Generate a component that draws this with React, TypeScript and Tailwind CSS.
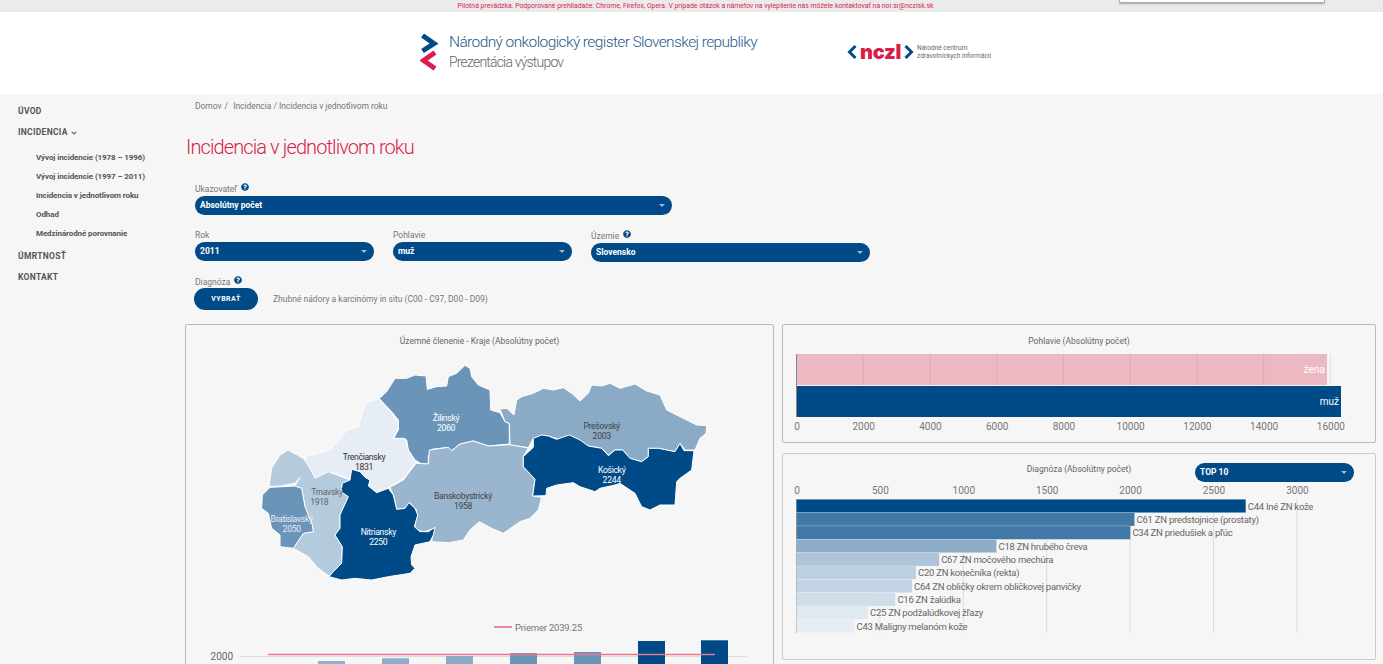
import { FaQuestionCircle, FaChevronDown } from "react-icons/fa";

const navy = "#004b87";

// map outlines were traced from crops, so each list carries the crop's offset
function outline(dx: number, dy: number, pts: string) {
  const coords = pts.trim().split(/\s+/).map((p) => {
    const [x, y] = p.split(",").map(Number);
    return `${x + dx},${y + dy}`;
  });
  return `M${coords.join(" L")} Z`;
}

const regions = [
  { fill: "#6b94b9", d: "M418,116 L440,95 L465,55 L500,55 L525,45 L558,48 L562,88 L590,80 L620,78 L625,50 L650,40 L675,16 L690,25 L695,50 L715,75 L750,90 L752,150 L780,158 L795,185 L808,190 L808,252 L745,258 L700,243 L660,252 L635,272 L625,262 L575,268 L565,290 L565,312 L545,312 L525,300 L505,270 L500,240 L470,235 L458,240 L475,210 L475,180 L455,155 Z" },
  { fill: "#8aaac6", d: outline(780, 75, "0,72 20,70 42,90 50,45 65,35 100,25 130,10 160,15 190,8 215,25 240,48 265,25 275,0 305,3 330,-5 360,10 405,-3 440,18 480,30 500,75 560,105 590,120 620,122 618,145 600,160 585,195 555,195 540,175 525,200 475,190 445,190 445,215 425,230 390,220 368,195 345,195 325,210 305,190 265,183 210,152 185,165 140,152 100,160 85,188 30,180 28,115 15,110") },
  { fill: "#9ab5ce", d: "M565,312 L568,270 L625,262 L635,272 L660,252 L700,243 L745,258 L808,254 L865,264 L850,290 L850,320 L885,358 L878,408 L905,412 L895,450 L870,475 L840,485 L790,520 L755,505 L718,485 L690,510 L670,540 L625,548 L575,545 L582,505 L555,515 L525,510 L525,490 L530,450 L510,428 L495,445 L470,448 L460,405 L450,382 L490,360 L528,310 Z" },
  { fill: "#004b87", d: outline(780, 75, "100,160 125,150 145,153 170,163 208,150 240,165 265,183 305,190 325,212 345,195 368,195 390,220 425,230 445,215 445,190 475,190 525,200 540,175 552,197 582,197 575,255 540,280 530,290 525,360 480,360 450,375 425,365 405,325 360,295 345,300 300,310 285,320 240,305 220,293 170,300 140,310 138,332 98,333 105,283 70,245 70,215 100,187") },
  { fill: "#e6edf4", d: outline(45, 120, "373,-4 410,40 430,65 430,85 415,115 450,115 460,150 482,188 445,235 400,265 365,278 340,258 345,240 330,232 315,215 290,208 285,240 260,228 220,215 180,235 165,205 150,195 150,170 225,150 268,100 275,90 310,80 330,10") },
  { fill: "#b4cadd", d: outline(45, 120, "42,260 50,205 75,165 100,150 145,175 165,205 180,235 220,215 285,240 262,250 258,275 280,290 255,345 255,385 240,405 262,440 260,490 222,528 190,505 160,470 115,445 145,400 175,395 172,375 150,320 140,265 120,258 135,232 120,250 75,258") },
  { fill: "#004b87", d: outline(45, 120, "290,208 315,215 330,232 345,240 340,258 365,278 400,265 415,285 425,328 450,325 462,308 480,325 488,345 478,380 495,395 520,395 540,382 535,405 525,425 480,435 468,470 470,495 480,505 465,520 400,530 350,540 300,535 260,540 222,530 235,515 260,490 262,440 240,405 255,385 255,345 280,290 258,275 262,250 285,240") },
  { fill: "#6b94b9", d: outline(45, 120, "20,325 22,285 45,262 120,258 140,265 150,320 172,375 175,395 145,400 115,445 75,440 75,405 50,385 40,340") },
];

const mapLabels = [
  { name: "Žilinský", value: "2060", x: 618, y: 182, c: "#ffffff" },
  { name: "Prešovský", value: "2003", x: 1085, y: 208, c: "#444444" },
  { name: "Košický", value: "2244", x: 1115, y: 338, c: "#ffffff" },
  { name: "Trenčiansky", value: "1831", x: 372, y: 301, c: "#333333" },
  { name: "Trnavský", value: "1918", x: 261, y: 406, c: "#666666", vx: 238 },
  { name: "Banskobystrický", value: "1958", x: 669, y: 417, c: "#444444" },
  { name: "Bratislavský", value: "2050", x: 155, y: 487, c: "#e6edf4" },
  { name: "Nitriansky", value: "2250", x: 415, y: 524, c: "#ffffff" },
];

const diagnoses = [
  { label: "C44 Iné ZN kože", end: 1245.8, fill: "#004b87" },
  { label: "C61 ZN predstojnice (prostaty)", end: 1134.6, fill: "#4278a6" },
  { label: "C34 ZN priedušiek a pľúc", end: 1130.4, fill: "#4278a6" },
  { label: "C18 ZN hrubého čreva", end: 996.5, fill: "#8eadc9" },
  { label: "C67 ZN močového mechúra", end: 939.2, fill: "#adc4da" },
  { label: "C20 ZN konečníka (rekta)", end: 916, fill: "#bcd0e1" },
  { label: "C64 ZN obličky okrem obličkovej panvičky", end: 912, fill: "#c2d4e3" },
  { label: "C16 ZN žalúdka", end: 895.4, fill: "#cfdde8" },
  { label: "C25 ZN podžalúdkovej žľazy", end: 868, fill: "#e0e9f0" },
  { label: "C43 Malígny melanóm kože", end: 854.6, fill: "#e6edf4" },
];

const averageBars = [
  { x: 318, top: 661, fill: "#94b0cb" },
  { x: 382, top: 658.3, fill: "#8eabc7" },
  { x: 446, top: 656, fill: "#8aaac6" },
  { x: 510, top: 653, fill: "#6b94b9" },
  { x: 574, top: 652, fill: "#6b94b9" },
  { x: 638, top: 641, fill: "#004b87" },
  { x: 701, top: 640.3, fill: "#004b87" },
];

function Help() {
  return <FaQuestionCircle className="inline-block text-[8px] text-[#004b87] ml-[4px] align-[1px]" />;
}

function Select({ label, className }: { label: string; className: string }) {
  return (
    <div className={`h-[19px] rounded-full bg-[#004b87] text-white text-[8.5px] font-bold flex items-center justify-between pl-[5px] pr-[7px] ${className}`}>
      <span>{label}</span>
      <span className="border-x-[3px] border-x-transparent border-t-[3px] border-t-[#9fb9d0]" />
    </div>
  );
}

function Field({ label, help, select, className }: { label: string; help?: boolean; select: string; className: string }) {
  return (
    <div>
      <div className="text-[8.5px] leading-[10px] mb-[2px] text-[#777]">
        {label}
        {help && <Help />}
      </div>
      <Select label={select} className={className} />
    </div>
  );
}

function SubLink({ children }: { children: string }) {
  return <li className="h-[19px] flex items-center text-[8px] font-bold tracking-[-0.1px] text-[#555]">{children}</li>;
}

function TopLink({ children }: { children: React.ReactNode }) {
  return <div className="text-[8.5px] font-bold text-[#555] tracking-[0.3px]">{children}</div>;
}

export default function App() {
  return (
    <div className="w-[1383px] h-[664px] overflow-hidden bg-[#f6f6f6] font-['Roboto',sans-serif] relative">
      {/* pilot banner */}
      <div className="h-[12px] bg-[#ebebeb] flex items-center justify-center pl-[8px] text-[6.85px] text-[#d81e4a]">
        Pilotná prevádzka. Podporované prehliadače: Chrome, Firefox, Opera. V prípade otázok a námetov na vylepšenie nás môžete kontaktovať na nor.sr@nczisk.sk
      </div>
      <div className="absolute left-[1119px] top-0 w-[206px] h-[3px] bg-white border-x border-b border-[#aaa] rounded-b-[2px] shadow-[0_1px_2px_rgba(0,0,0,0.3)]" />

      {/* header */}
      <header className="h-[82px] bg-white flex items-center pl-[420px] pb-[2px]">
        <svg width="18" height="38" viewBox="0 0 18 38" className="mr-[11px]">
          <path d="M2.5 2.5 L14 10.5 L2.5 18" fill="none" stroke="#004b87" strokeWidth="5" />
          <path d="M15 19.5 L3.5 27.5 L15 35.5" fill="none" stroke="#d81e4a" strokeWidth="5" />
        </svg>
        <div className="mr-[90px]">
          <div className="text-[15.5px] leading-[20px] tracking-[-0.6px] font-light text-[#1f5a8c]">Národný onkologický register Slovenskej republiky</div>
          <div className="text-[14px] leading-[20px] tracking-[-0.8px] font-light text-[#666]">Prezentácia výstupov</div>
        </div>
        <div className="flex items-center">
          <svg width="10" height="16" viewBox="0 0 10 16">
            <path d="M8.5 2 L2.5 8 L8.5 14" fill="none" stroke="#004b87" strokeWidth="3" />
          </svg>
          <span className="mx-[3px] text-[#d81e4a] text-[20px] leading-[20px] font-black tracking-[-0.3px] font-['Inter',sans-serif] lowercase">ncz<span className="uppercase">I</span></span>
          <svg width="10" height="16" viewBox="0 0 10 16">
            <path d="M1.5 2 L7.5 8 L1.5 14" fill="none" stroke="#004b87" strokeWidth="3" />
          </svg>
          <div className="ml-[3px] text-[6.5px] leading-[8px] text-[#666]">
            Národné centrum<br />zdravotníckych informácií
          </div>
        </div>
      </header>

      <div className="flex">
        {/* sidebar */}
        <aside className="w-[186px] shrink-0 pl-[18px] pt-[11px]">
          <TopLink>ÚVOD</TopLink>
          <div className="mt-[8px]">
            <TopLink>
              INCIDENCIA <FaChevronDown className="inline-block text-[6px] ml-[1px]" />
            </TopLink>
          </div>
          <ul className="pl-[18px] mt-[10px]">
            <SubLink>Vývoj incidencie (1978 – 1996)</SubLink>
            <SubLink>Vývoj incidencie (1997 – 2011)</SubLink>
            <SubLink>Incidencia v jednotlivom roku</SubLink>
            <SubLink>Odhad</SubLink>
            <SubLink>Medzinárodné porovnanie</SubLink>
          </ul>
          <div className="mt-[6px]">
            <TopLink>ÚMRTNOSŤ</TopLink>
          </div>
          <div className="mt-[9px]">
            <TopLink>KONTAKT</TopLink>
          </div>
        </aside>

        {/* main */}
        <main className="w-[1190px]">
          <div className="pl-[9px] pt-[7px] text-[8.5px] leading-[10px] tracking-[-0.05px] text-[#777]">
            Domov <span className="mx-[1px]">/</span> &nbsp;Incidencia / Incidencia v jednotlivom roku
          </div>
          <h1 className="mt-[23px] text-[20px] leading-[26px] tracking-[-0.9px] font-light text-[#d81e4a]">Incidencia v jednotlivom roku</h1>

          <div className="pl-[9px] mt-[23px]">
            <Field label="Ukazovateľ" help select="Absolútny počet" className="w-[477px]" />
            <div className="flex gap-[19px] mt-[15px]">
              <Field label="Rok" select="2011" className="w-[179px]" />
              <Field label="Pohlavie" select="muž" className="w-[179px]" />
              <Field label="Územie" help select="Slovensko" className="w-[279px]" />
            </div>
            <div className="mt-[14px] text-[8.5px] leading-[10px] text-[#777]">
              Diagnóza
              <Help />
            </div>
            <div className="flex items-center mt-[1px]">
              <button className="w-[64px] h-[22px] ml-[-1px] rounded-full bg-[#004b87] text-white text-[7px] font-bold tracking-[0.5px]">VYBRAŤ</button>
              <span className="ml-[15px] text-[8.5px] text-[#777]">Zhubné nádory a karcinómy in situ (C00 - C97, D00 - D09)</span>
            </div>
          </div>

          <div className="flex gap-[8px] mt-[14px] ml-[-1px]">
            {/* territorial card */}
            <section className="w-[589px] h-[420px] shrink-0 border border-[#bbb] rounded-[2px]">
              <div className="text-center text-[8.5px] leading-[10px] text-[#666] mt-[11px]">Územné členenie - Kraje (Absolútny počet)</div>
              <svg width="480" height="230" viewBox="0 0 1440 690" className="ml-[54px] mt-[14px] block">
                {regions.map((r, i) => (
                  <path key={i} d={r.d} fill={r.fill} stroke="#ffffff" strokeWidth="3" strokeLinejoin="round" />
                ))}
                {mapLabels.map((l) => (
                  <g key={l.name} fontSize="26" letterSpacing="-1" fill={l.c} textAnchor="middle">
                    <text x={l.x} y={l.y}>{l.name}</text>
                    <text x={l.vx ?? l.x} y={l.y + 30}>{l.value}</text>
                  </g>
                ))}
              </svg>
              <svg width="587" height="120" viewBox="186 590 587 120" className="block">
                <line x1="494" x2="512" y1="627" y2="627" stroke="#d81e4a" />
                <text x="515" y="630.5" fontSize="9.5" letterSpacing="-0.2" fill="#777">Priemer 2039.25</text>
                <line x1="240" x2="747" y1="656.5" y2="656.5" stroke="#dddddd" />
                <text x="233" y="660" fontSize="10" textAnchor="end" fill="#666">2000</text>
                {averageBars.map((b) => (
                  <rect key={b.x} x={b.x} y={b.top} width="27" height={700 - b.top} fill={b.fill} />
                ))}
                <line x1="268" x2="715" y1="654.5" y2="654.5" stroke="#e8788c" strokeWidth="1.5" />
              </svg>
            </section>

            {/* right column */}
            <div className="w-[594px] flex flex-col gap-[10px]">
              <section className="h-[119px] border border-[#bbb] rounded-[2px]">
                <svg width="592" height="117" viewBox="783 325 592 117" className="block">
                  <text x="1079" y="344" fontSize="8.5" textAnchor="middle" fill="#666">Pohlavie (Absolútny počet)</text>
                  <rect x="796.5" y="354" width="530.5" height="31" fill="#ecb8c2" />
                  {[0, 1, 2, 3, 4, 5, 6, 7, 8].map((i) => (
                    <line key={i} x1={796.5 + i * 66.73} x2={796.5 + i * 66.73} y1="354" y2="385" stroke={i === 8 ? "#e0e0e0" : "#dfa9b5"} />
                  ))}
                  <rect x="796.5" y="386" width="544.5" height="31" fill={navy} />
                  <line x1="796.5" x2="796.5" y1="354" y2="417" stroke="#888" />
                  <text x="1325" y="373" fontSize="10" textAnchor="end" fill="#ffffff">žena</text>
                  <text x="1339" y="405" fontSize="10" textAnchor="end" fill="#ffffff">muž</text>
                  {[0, 2000, 4000, 6000, 8000, 10000, 12000, 14000, 16000].map((v, i) => (
                    <text key={v} x={797 + i * 66.73} y="430" fontSize="10" textAnchor="middle" fill="#777">{v}</text>
                  ))}
                </svg>
              </section>
              <section className="h-[207px] border border-[#ccc] rounded-[2px] relative">
                <svg width="592" height="205" viewBox="783 454 592 205" className="block">
                  <text x="1079" y="472" fontSize="8.5" textAnchor="middle" fill="#666">Diagnóza (Absolútny počet)</text>
                  {[0, 500, 1000, 1500, 2000, 2500, 3000].map((v, i) => (
                    <g key={v}>
                      <text x={797 + i * 83.4} y="494" fontSize="10" textAnchor="middle" fill="#777">{v}</text>
                      <line x1={796.5 + i * 83.4} x2={796.5 + i * 83.4} y1="499" y2="633" stroke={i === 0 ? "#888" : "#dddddd"} />
                    </g>
                  ))}
                  {diagnoses.map((d, i) => (
                    <g key={d.label}>
                      <rect x="796.5" y={499.3 + i * 13.34} width={d.end - 796.5} height="13.34" fill={d.fill} stroke="#ffffff" strokeOpacity="0.35" strokeWidth="0.5" />
                      <text x={d.end + 2} y={509.5 + i * 13.34} fontSize="9.5" letterSpacing="-0.25" fill="#666">{d.label}</text>
                    </g>
                  ))}
                </svg>
                <Select label="TOP 10" className="absolute left-[412px] top-[9px] w-[159px]" />
              </section>
            </div>
          </div>
        </main>
      </div>
    </div>
  );
}
